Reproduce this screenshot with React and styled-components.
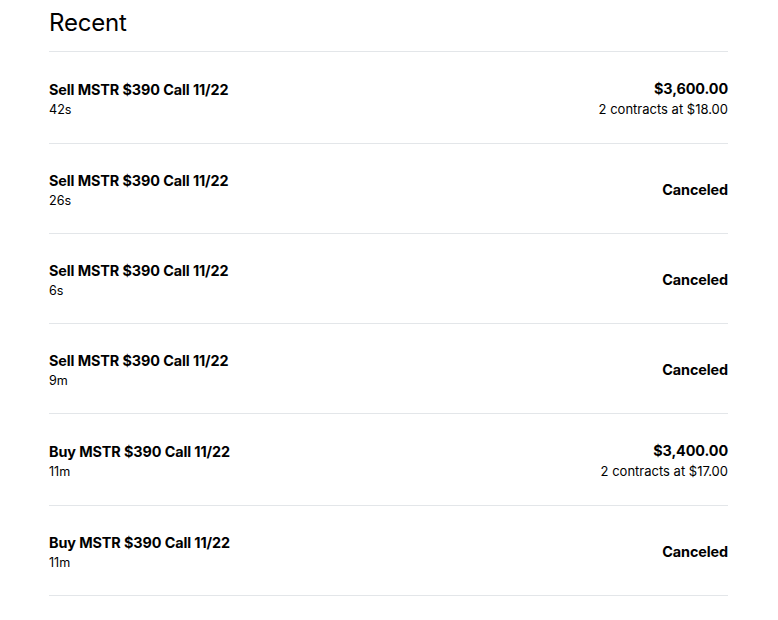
import styled, { createGlobalStyle } from "styled-components";

const GlobalStyle = createGlobalStyle`
  body {
    margin: 0;
    background: #ffffff;
    font-family: Inter, "Liberation Sans", sans-serif;
    color: #000000;
  }
`;

const orders = [
  { side: "Sell", age: "42s", total: "$3,600.00", detail: "2 contracts at $18.00" },
  { side: "Sell", age: "26s", status: "Canceled" },
  { side: "Sell", age: "6s", status: "Canceled" },
  { side: "Sell", age: "9m", status: "Canceled" },
  { side: "Buy", age: "11m", total: "$3,400.00", detail: "2 contracts at $17.00" },
  { side: "Buy", age: "11m", status: "Canceled" },
];

export default function App() {
  return (
    <>
      <GlobalStyle />
      <Page>
        <Heading>Recent</Heading>
        <List>
          {orders.map((o, i) => (
            <Row key={i}>
              <Left>
                <Title>{o.side} MSTR $390 Call 11/22</Title>
                <Age>{o.age}</Age>
              </Left>
              <Right>
                {o.status ? (
                  <Strong>{o.status}</Strong>
                ) : (
                  <>
                    <Strong>{o.total}</Strong>
                    <Detail>{o.detail}</Detail>
                  </>
                )}
              </Right>
            </Row>
          ))}
        </List>
      </Page>
    </>
  );
}

const Page = styled.div`
  width: 679px;
  margin-left: 49px;
`;

const Heading = styled.h2`
  margin: 0;
  padding-top: 8px;
  height: 43px;
  font-size: 24px;
  font-weight: 400;
  line-height: 30px;
  letter-spacing: -0.2px;
  border-bottom: 1px solid #e3e6e9;
`;

const List = styled.div`
  display: flex;
  flex-direction: column;
`;

const Row = styled.div`
  display: flex;
  justify-content: space-between;
  align-items: center;
  padding: 26px 0 24px;
  border-bottom: 1px solid #e3e6e9;
`;

const Left = styled.div`
  display: flex;
  flex-direction: column;
`;

const Title = styled.span`
  font-size: 14.4px;
  font-weight: 700;
  line-height: 22px;
  letter-spacing: -0.1px;
`;

const Age = styled.span`
  font-size: 12.6px;
  line-height: 17px;
`;

const Right = styled.div`
  display: flex;
  flex-direction: column;
  align-items: flex-end;
`;

const Strong = styled.span`
  font-size: 14.4px;
  font-weight: 700;
  line-height: 22px;
  letter-spacing: -0.1px;
`;

const Detail = styled.span`
  font-size: 13px;
  line-height: 19px;
`;
